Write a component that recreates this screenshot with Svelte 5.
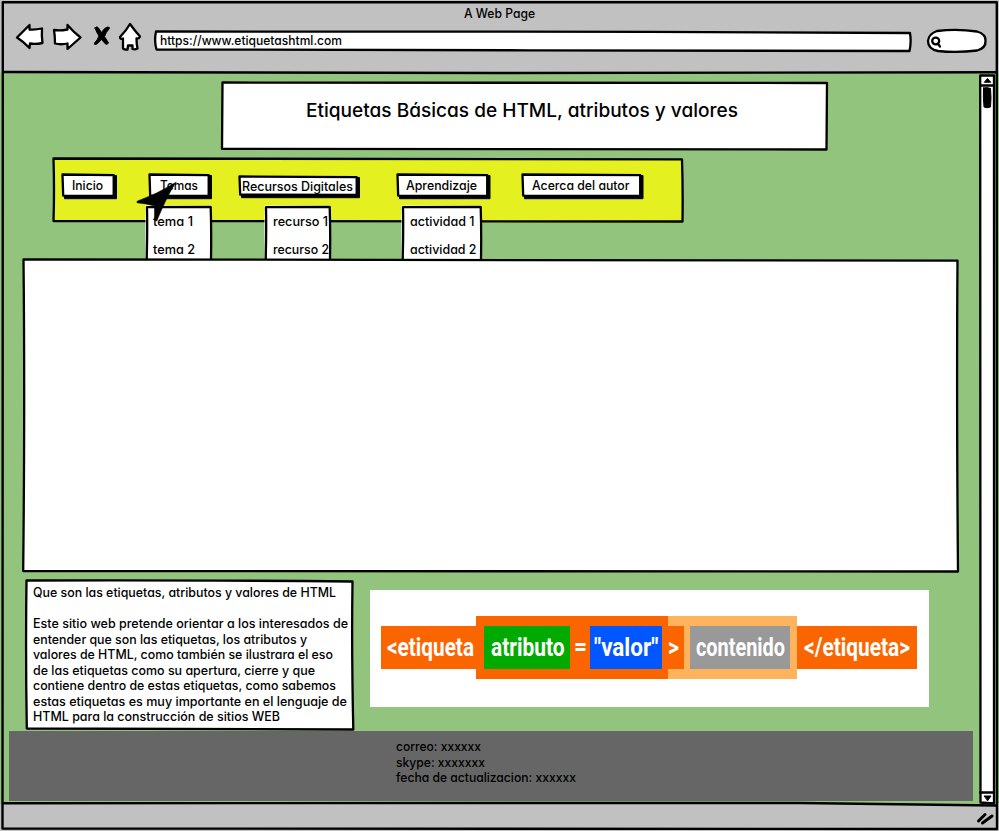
<script>
  const menu = [
    {
      text: 'Inicio', w: 31, box: [62, 174, 52, 22], tx: 72, base: 190
    },
    {
      text: 'Temas', w: 38, box: [149, 174, 60, 22], tx: 160, base: 190,
      drop: { x: 146.5, w: 64, tx: 153, items: [['tema 1', 40], ['tema 2', 42]] }
    },
    {
      text: 'Recursos Digitales', w: 111, box: [238.5, 176, 118, 19], tx: 241.5, base: 190.5,
      drop: { x: 266, w: 64, tx: 272.5, items: [['recurso 1', 55], ['recurso 2', 56]] }
    },
    {
      text: 'Aprendizaje', w: 71, box: [396.5, 174, 90.5, 22], tx: 406, base: 190,
      drop: { x: 403, w: 78, tx: 410, items: [['actividad 1', 64.5], ['actividad 2', 66.5]] }
    },
    {
      text: 'Acerca del autor', w: 97.5, box: [522, 174, 118.5, 22], tx: 532, base: 190
    }
  ];

  // gap in front of each menu button inside the bar
  const gapBefore = (i) => menu[i].box[0] - (i ? menu[i - 1].box[0] + menu[i - 1].box[2] : 53);

  const article = [
    ['Que son las etiquetas, atributos y valores de HTML', 303, 17],
    ['', 0, 15],
    ['Este sitio web pretende orientar a los interesados de', 315, 15.5],
    ['entender que son las etiquetas, los atributos y', 274, 16],
    ['valores de HTML, como también se ilustrara el eso', 300, 15.8],
    ['de las etiquetas como su apertura, cierre y que', 282, 15.5],
    ['contiene dentro de estas etiquetas, como sabemos', 303, 15.8],
    ['estas etiquetas es muy importante en el lenguaje de', 314, 15.3],
    ['HTML para la construcción de sitios WEB', 247, 15.8]
  ];

  const contact = [
    ['correo: xxxxxx', 85],
    ['skype: xxxxxxx', 89],
    ['fecha de actualizacion: xxxxxx', 180]
  ];
</script>

{#snippet line(text, w, h, base, size)}
  <svg class="line" width={w} height={h}>
    <text x="0" y={base} font-size={size} textLength={w} lengthAdjust="spacingAndGlyphs">{text}</text>
  </svg>
{/snippet}

{#snippet edge(x, y, w, h, d, fill)}
  <svg class="edge" viewBox="{x} {y} {w} {h}" width={w} height={h}>
    <path {d} {fill} />
  </svg>
{/snippet}

<div class="window">
  <header>
    <div class="caption">{@render line('A Web Page', 71, 22, 18, 12.7)}</div>
    <div class="tools">
      <svg class="ico back" viewBox="15 23 30 28" width="30" height="28">
        <path d="M17 37.500 29.500 25 29.500 29.500Q35 30 42 28.500Q41.500 36 42.500 43Q35 44.500 30 43.500L29.500 48Q24 42 17 37.500Z" />
      </svg>
      <svg class="ico fwd" viewBox="52 23 30 28" width="30" height="28">
        <path d="M54 30Q60 31 67.500 29.500L67.500 25Q73 31.500 80.500 37.500L67.500 49 67.500 43.500Q61 45 55 43.500Q55 36 54 30Z" />
      </svg>
      <svg class="ico stop" viewBox="93 25 18 21" width="18" height="21">
        <path class="solid" d="M95 28Q97 25.500 98.500 28L101.500 32.500Q104.500 27.500 107.500 27Q110.500 27 109 29Q106 32 104.500 36.500L108.500 43Q107 45 105.500 44L101.500 39.500Q98.500 43 96 44.500Q93.500 44.500 94.500 43Q97.500 40 99 36Q96.500 32.500 95 28Z" />
      </svg>
      <svg class="ico home" viewBox="118 22 24 29" width="24" height="29">
        <path d="M130 24Q135 31 140 36.500Q139 39 136.500 38.500Q136.500 44 137.500 48.500Q135 50 132.500 49V45.500H128L127.500 49.500Q125 50 123 48.500V38.500Q120 39.500 120 37Q126 31 130 24Z" />
      </svg>
      <div class="address">
        {@render edge(154, 31, 757, 20, 'M156 31.500Q400 31 650 31.800L910 33Q911.500 42 909.500 51Q700 50.500 530 50.300L156.500 49.500Q154 41 156 31.500Z', '#fff')}
        <div class="over">{@render line('https://www.etiquetashtml.com', 182, 19, 14, 12.7)}</div>
      </div>
      <svg class="ico search" viewBox="926 27 61 26" width="61" height="26">
        <path d="M937 31Q957 28.500 977 31.500Q986 34 985.500 41Q986 48 977 50.500Q957 53 938 51Q928 49 928 41Q928.500 34 937 31Z" />
        <ellipse cx="935.700" cy="41" rx="3.500" ry="3.300" fill="none" />
        <path d="M938 44 940 46.500" />
      </svg>
    </div>
  </header>

  <main>
    <div class="page">
      <div class="title">
        {@render edge(222, 82, 605, 67, 'M222.500 82.500Q500 81.500 827 83L826.500 149.500Q500 149.500 222 148.800Z', '#fff')}
        <div class="over">{@render line('Etiquetas Básicas de HTML, atributos y valores', 432, 30, 20, 18.5)}</div>
      </div>

      <nav>
        {@render edge(53, 158, 630, 63, 'M53.500 158.500Q350 158 682 159.300Q683 190 682.500 221.500Q350 220.500 53.500 221Q54.500 190 53.500 158.500Z', '#e4f01f')}
        {#each menu as m, i}
          {@const [x, y, w, h] = m.box}
          <div class="button" style="margin-left:{gapBefore(i)}px;margin-top:{y - 158}px;width:{w}px;height:{h}px">
            <svg class="edge" viewBox="{x} {y} {w} {h}" width={w} height={h}>
              <path class="solid" d="M{x + 2.500} {y + h}V{y + h + 2.700}H{x + w + 2.500}V{y + 1.500}H{x + w}V{y + h}Z" />
              <path d="M{x + 0.500} {y + 0.500}L{x + w - 0.300} {y + 1.200}V{y + h}L{x + 1.200} {y + h - 0.300}Z" fill="#fff" />
            </svg>
            <div class="over" style="padding-left:{m.tx - x}px">{@render line(m.text, m.w, h, m.base - y, 12.7)}</div>
            {#if m.drop}
              <div class="drop" style="left:{m.drop.x - x}px;top:{206 - y}px;width:{m.drop.w}px">
                <svg class="edge" viewBox="0 0 {m.drop.w} 53" width={m.drop.w} height="53">
                  <path class="halo" d="M-1.500 53V-0.500H{m.drop.w + 0.500}V53Z" />
                  <path d="M-0.300 53Q0.500 25 0 1.200L{m.drop.w - 0.300} 1Q{m.drop.w + 0.500} 25 {m.drop.w} 53" fill="#fff" />
                </svg>
                <div class="over" style="padding-left:{m.drop.tx - m.drop.x}px">
                  {#each m.drop.items as [t, tw]}
                    {@render line(t, tw, 28, 20, 12.7)}
                  {/each}
                </div>
              </div>
            {/if}
          </div>
        {/each}
        <svg class="cursor" viewBox="136 181 41 41" width="41" height="41">
          <path d="M176 182.300Q168 194 156.800 221Q153.500 221 154.500 217V206Q146 203.500 137 202.800V201.300Q157 194 176 182.300Z" />
        </svg>
      </nav>

      <section class="stage">
        {@render edge(23, 260, 935, 311, 'M23.500 259.400Q500 259 957.500 260.700Q956.500 400 958 571.500Q500 570.500 23.200 571Q25 400 23.500 259.400Z', '#fff')}
      </section>

      <div class="lower">
        <article>
          {@render edge(26, 580, 327, 149, 'M26.500 580.500Q200 580 352.500 581.500Q351.500 650 353.300 729.500Q200 729.500 26.800 728.500Q25.500 650 26.500 580.500Z', '#fff')}
          <div class="over">
            {#each article as [t, w, h]}
              {#if t}{@render line(t, w, h, h - 0.4, 12.7)}{:else}<div class="blank"></div>{/if}
            {/each}
          </div>
        </article>
        <figure>
          <div class="tag first">{@render line('<etiqueta', 87, 43, 29.5, 26)}</div>
          <div class="attrs">
            <div class="name">{@render line('atributo', 73.5, 43, 29.5, 26)}</div>
            <div class="eq">{@render line('=', 13, 43, 29, 25)}</div>
            <div class="value">{@render line('"valor"', 64.5, 43, 29.5, 26)}</div>
          </div>
          <div class="content">
            <div class="gt">{@render line('>', 11, 43, 29.5, 26)}</div>
            <div class="inner">{@render line('contenido', 89, 43, 29.5, 26)}</div>
          </div>
          <div class="tag last">{@render line('</etiqueta>', 106, 43, 29.5, 26)}</div>
        </figure>
      </div>

      <footer>
        {#each contact as [t, w]}
          {@render line(t, w, 15.6, 12, 12.7)}
        {/each}
      </footer>
    </div>

    <svg class="scroll" viewBox="979 73 16 731" width="16" height="731">
      <path d="M980.200 75.500H994Q993 400 994 803.500L980.500 802.500Q980 400 980.200 75.500Z" fill="#fff" />
      <path d="M980 85.500H994M980 792.500H994" />
      <path class="solid" d="M984.500 82 987.500 78.500 990.500 82ZM984.500 796H991L987.800 800.500Z" />
      <path class="solid" d="M983.500 88Q987 87 990.500 88.500Q991.500 98 990.500 107Q987 108.500 984 107Q983 98 983.500 88Z" />
    </svg>
  </main>

  <div class="status">
    <svg viewBox="976 811 20 15" width="20" height="15">
      <path d="M978.500 821 985 814.500M982.500 823 992 816" />
    </svg>
  </div>

  <svg class="outline" viewBox="0 0 999 831" width="999" height="831">
    <path d="M2.800 2.200Q500 1.800 996.800 2.200Q995.500 400 997 829Q500 827.500 2.500 828.500Q4 400 2.800 2.200Z" />
    <path d="M3 72Q200 72.500 500 73L996 72.300" />
    <path d="M3 803.200Q500 804 800 803L996 805.500" />
  </svg>
</div>

<style>
  :global(body) {
    background: #d8d8d8;
  }
  .window {
    position: relative;
    width: 999px;
    height: 831px;
    display: flex;
    flex-direction: column;
    overflow: hidden;
    background: #c1c1c1;
    font-family: Inter, "Liberation Sans", sans-serif;
    font-weight: 500;
    font-feature-settings: "cv11";
    color: #000;
  }
  svg {
    display: block;
    overflow: visible;
    flex: none;
  }
  .line text {
    fill: #000;
  }
  header {
    height: 73px;
    flex: none;
  }
  .caption {
    padding-left: 464px;
    height: 22px;
  }
  .tools {
    display: flex;
    align-items: flex-start;
  }
  path,
  ellipse {
    stroke: #000;
    stroke-width: 2.3;
    stroke-linejoin: round;
    stroke-linecap: round;
  }
  .ico {
    fill: #fff;
  }
  .solid {
    fill: #000;
    stroke-width: 1;
  }
  .back {
    margin: 1px 0 0 15px;
  }
  .fwd {
    margin: 1px 0 0 7px;
  }
  .stop {
    margin: 3px 0 0 11px;
  }
  .home {
    margin: 0 0 0 7px;
  }
  .address {
    position: relative;
    width: 757px;
    height: 20px;
    margin: 9px 0 0 12px;
  }
  .address .over {
    padding-left: 6px;
  }
  .search {
    margin: 5px 0 0 15px;
  }
  .edge {
    position: absolute;
    inset: 0;
  }
  .over {
    position: relative;
  }
  main {
    display: flex;
    height: 731px;
    flex: none;
    background: #93c47d;
  }
  .page {
    width: 979px;
    display: flex;
    flex-direction: column;
    align-items: flex-start;
  }
  .title {
    position: relative;
    width: 605px;
    height: 67px;
    margin: 9px 0 0 222px;
  }
  .title .over {
    padding: 15px 0 0 84px;
  }
  nav {
    position: relative;
    display: flex;
    align-items: flex-start;
    width: 630px;
    height: 63px;
    margin: 9px 0 0 53px;
  }
  .button {
    position: relative;
    flex: none;
  }
  .drop {
    position: absolute;
    height: 53px;
  }
  .halo {
    fill: #fff;
    stroke: none;
  }
  .cursor {
    position: absolute;
    left: 83px;
    top: 23px;
  }
  .cursor path {
    stroke-width: 0.5;
  }
  .stage {
    position: relative;
    width: 935px;
    height: 311px;
    margin: 39px 0 0 23px;
  }
  .lower {
    display: flex;
    align-items: flex-start;
    margin: 9px 0 0 26px;
  }
  article {
    position: relative;
    width: 327px;
    height: 149px;
  }
  article .over {
    padding-left: 7px;
  }
  .blank {
    height: 15.6px;
  }
  figure {
    display: flex;
    align-items: center;
    box-sizing: border-box;
    width: 559px;
    height: 117px;
    margin: 10px 0 0 17px;
    padding: 0 0 2px 10.5px;
    background: #fff;
    font-family: Roboto, "Liberation Sans", sans-serif;
    font-weight: 700;
  }
  figure .line text {
    fill: #fff;
  }
  .tag,
  .gt {
    background: #fb6500;
    height: 43px;
    box-sizing: border-box;
  }
  .first {
    width: 95px;
    padding-left: 6.5px;
  }
  .attrs,
  .content {
    display: flex;
    align-items: center;
    height: 63px;
    box-sizing: border-box;
  }
  .attrs {
    width: 192.5px;
    padding-left: 8.5px;
    background: #fb6500;
  }
  .name {
    width: 86px;
    padding-left: 7px;
    box-sizing: border-box;
    background: #00aa00;
  }
  .eq {
    width: 20px;
    padding-left: 3.5px;
    box-sizing: border-box;
  }
  .value {
    width: 72px;
    padding-left: 4px;
    box-sizing: border-box;
    background: #0057ff;
  }
  .content {
    width: 129px;
    background: #ffb35c;
  }
  .gt {
    width: 16px;
  }
  .inner {
    width: 100px;
    margin-left: 6px;
    padding-left: 5.5px;
    box-sizing: border-box;
    background: #999;
  }
  .last {
    width: 120px;
    padding-left: 7px;
  }
  footer {
    width: 964px;
    height: 70px;
    box-sizing: border-box;
    margin: 2px 0 0 9px;
    padding: 8px 0 0 387px;
    background: #666;
  }
  .status {
    flex: 1;
    padding: 7px 0 0 976px;
  }
  .status path {
    fill: none;
    stroke-width: 3;
  }
  .outline {
    position: absolute;
    inset: 0;
    pointer-events: none;
  }
  .outline path {
    fill: none;
    stroke-width: 2.4;
  }
</style>
